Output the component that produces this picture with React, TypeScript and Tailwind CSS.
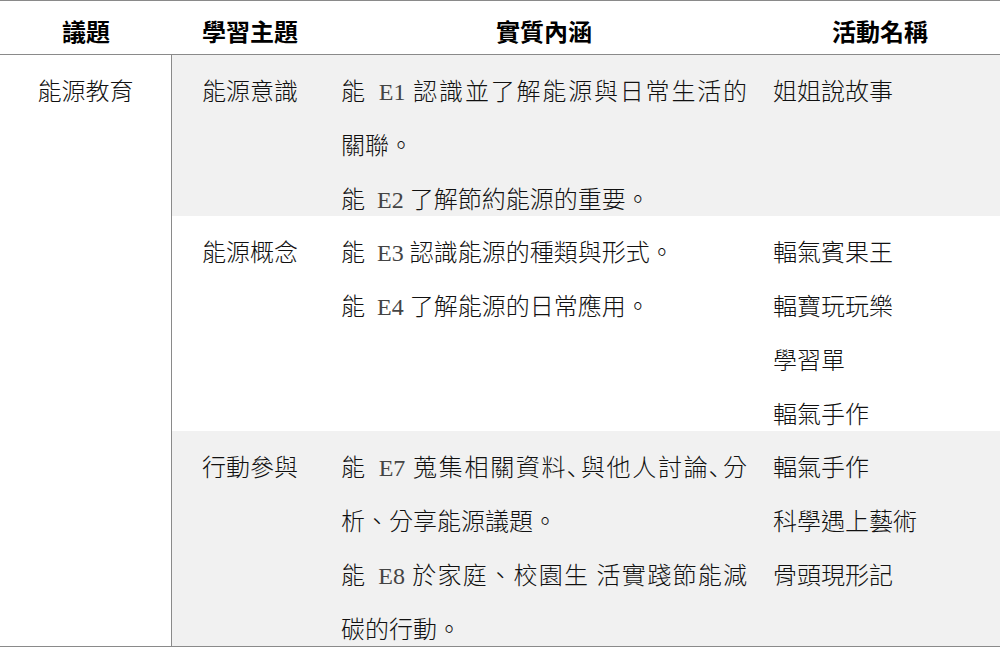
const font = "font-['Liberation_Serif','Noto_Sans_CJK_TC',serif]"

type Line = { code?: string; text: string; justify?: boolean }

const rows: { topic: string; content: Line[]; activities: string[]; bg: string; height: string }[] = [
  {
    topic: "能源意識",
    content: [
      { code: "E1", text: "認識並了解能源與日常生活的", justify: true },
      { text: "關聯。" },
      { code: "E2", text: "了解節約能源的重要。" },
    ],
    activities: ["姐姐說故事"],
    bg: "bg-[#f1f1f1]",
    height: "h-[161px]",
  },
  {
    topic: "能源概念",
    content: [
      { code: "E3", text: "認識能源的種類與形式。" },
      { code: "E4", text: "了解能源的日常應用。" },
    ],
    activities: ["輻氣賓果王", "輻寶玩玩樂", "學習單", "輻氣手作"],
    bg: "bg-white",
    height: "h-[215px]",
  },
  {
    topic: "行動參與",
    content: [
      { code: "E7", text: "蒐集相關資料､與他人討論､分", justify: true },
      { text: "析、分享能源議題。" },
      { code: "E8", text: "於家庭、校園生 活實踐節能減", justify: true },
      { text: "碳的行動。" },
    ],
    activities: ["輻氣手作", "科學遇上藝術", "骨頭現形記"],
    bg: "bg-[#f1f1f1]",
    height: "h-[215px]",
  },
]

export default function App() {
  return (
    <div className={`w-[1000px] h-[648px] overflow-hidden bg-white text-[24px] text-[#111] font-light ${font}`}>
      <div className="border-t border-b border-[#8a8a8a] flex h-[55px] font-bold text-black">
        <div className="w-[172px] flex justify-center pt-[12px] leading-[41px]">議題</div>
        <div className="w-[169px] pl-[30px] pt-[12px] leading-[41px]">學習主題</div>
        <div className="w-[406px] text-center pt-[12px] leading-[41px]">實質內涵</div>
        <div className="w-[26px]" />
        <div className="w-[214px] text-center pt-[12px] leading-[41px]">活動名稱</div>
      </div>
      <div className="flex border-b border-[#8a8a8a]">
        <div className="w-[172px] border-r-[1.5px] border-[#8a8a8a] text-center pt-[10px] leading-[54px]">能源教育</div>
        <div className="flex-1 flex flex-col">
          {rows.map((row) => (
            <div key={row.topic} className={`flex ${row.bg} ${row.height}`}>
              <div className="w-[169px] pl-[30px] pt-[10px] leading-[54px]">{row.topic}</div>
              <div className="w-[406px] pt-[10px] leading-[54px]">
                {row.content.map((line, i) => (
                  <div
                    key={i}
                    className={line.justify ? "whitespace-nowrap text-justify [text-align-last:justify]" : "whitespace-nowrap"}
                  >
                    {line.code && (
                      <>
                        能{"\u2002"}<span className="font-normal text-[#444]">{line.code}</span>{" "}
                      </>
                    )}
                    {line.text}
                  </div>
                ))}
              </div>
              <div className="w-[26px]" />
              <div className="flex-1 pt-[10px] leading-[54px]">
                {row.activities.map((a) => (
                  <div key={a}>{a}</div>
                ))}
              </div>
            </div>
          ))}
        </div>
      </div>
    </div>
  )
}
